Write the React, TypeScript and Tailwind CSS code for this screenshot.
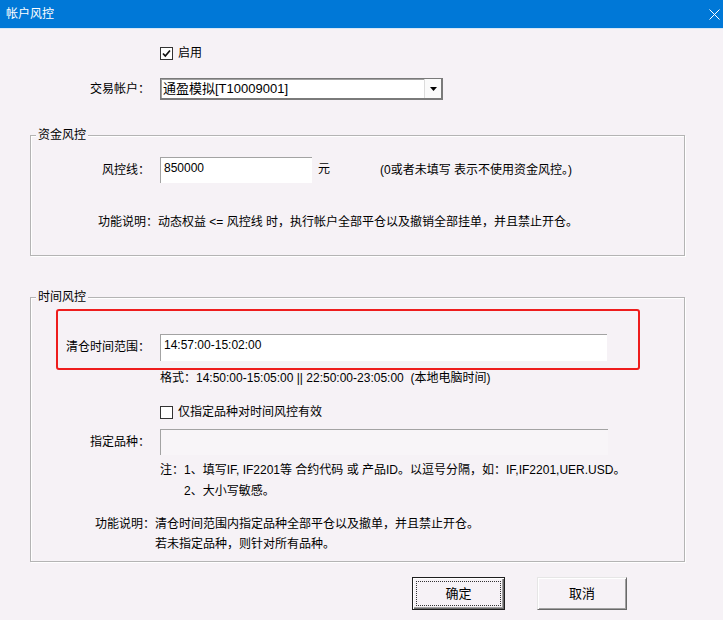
import React from "react";

const face = "bg-[#f6f2f6]";

function Check({checked}: {checked?: boolean}) {
    return (<span className="w-[13px] h-[13px] border border-[#333] bg-white flex items-center justify-center">
        {checked && <svg width="11" height="11" viewBox="0 0 11 11">
            <path d="M2 5.5 L4.3 8 L9 2.5" fill="none" stroke="#111" strokeWidth="1.7"/>
        </svg>}
    </span>);
}

function Group({title, className, children}: {title: string; className: string; children: React.ReactNode}) {
    return (<div
        className={`relative border border-[#b4b4b4] shadow-[inset_1px_1px_0_#fff,1px_1px_0_#fff] ${className}`}>
        <span className={`absolute -top-[9px] left-[5px] px-[2px] leading-[16px] ${face}`}>{title}</span>
        {children}
    </div>);
}

function Edit({className, children}: {className: string; children?: React.ReactNode}) {
    return (<div
        className={`border-t border-l border-[#a3a3a3] px-[3px] pt-[2px] leading-[16px] ${className}`}>{children}</div>);
}

export default function App() {
    return (<div
        className={`w-[723px] h-[620px] overflow-hidden text-[12px] text-black ${face} font-['Liberation_Sans','Noto_Sans_CJK_SC',sans-serif]`}>
        <div className="h-[28px] bg-[#0078d7] flex items-center justify-between pl-[6px] pr-[3px] text-white">
            <span>帐户风控</span>
            <svg width="11" height="11" viewBox="0 0 11 11">
                <path d="M0.5 0.5 L10.5 10.5 M10.5 0.5 L0.5 10.5" stroke="#fff" strokeWidth="1"/>
            </svg>
        </div>
        <div className="h-[1px] bg-[#d5e6f6]"/>

        <div className="mt-[16px] h-[16px] ml-[160px] flex items-center gap-[5px]">
            <Check checked/>
            <span>启用</span>
        </div>

        <div className="mt-[17px] h-[22px] flex items-center">
            <span className="w-[150px] text-right">交易帐户：</span>
            <div
                className="ml-[10px] w-[283px] h-[22px] flex border border-[#7a7a7a] border-r-2 border-b-2 bg-white shadow-[inset_1px_1px_0_#a0a0a0]">
                <span className="flex-1 pl-[2px] text-[13px] leading-[19px]">通盈模拟[T10009001]</span>
                <span className="w-[17px] border-l border-[#dcdcdc] flex items-center justify-center bg-[#fafafa]">
                    <svg width="7" height="4" viewBox="0 0 7 4"><path d="M0 0 H7 L3.5 4 Z" fill="#000"/></svg>
                </span>
            </div>
        </div>

        <Group title="资金风控" className="mt-[35px] ml-[30px] w-[655px] h-[121px]">
            <div className="mt-[21px] flex items-start">
                <span className="w-[119px] text-right leading-[26px]">风控线：</span>
                <Edit className="ml-[10px] w-[152px] h-[26px] bg-white">850000</Edit>
                <span className="ml-[6px] leading-[24px]">元</span>
                <span className="ml-[50px] leading-[26px]">(0或者未填写 表示不使用资金风控。)</span>
            </div>
            <div className="mt-[31px] ml-[67px] leading-[16px]">
                功能说明：动态权益 &lt;= 风控线 时，执行帐户全部平仓以及撤销全部挂单，并且禁止开仓。
            </div>
        </Group>

        <Group title="时间风控" className="mt-[41px] ml-[30px] w-[655px] h-[265px]">
            <div className="mt-[11px] ml-[25px] w-[584px] h-[61px] border-2 border-[#ee1d1d] rounded-[3px]">
                <div className="mt-[23px] flex items-start">
                    <span className="w-[92px] text-right leading-[27px]">清仓时间范围：</span>
                    <Edit className="ml-[10px] w-[447px] h-[27px] bg-white">14:57:00-15:02:00</Edit>
                </div>
            </div>
            <div className="ml-[129px] leading-[16px]">格式：14:50:00-15:05:00 || 22:50:00-23:05:00 &nbsp;(本地电脑时间)</div>

            <div className="mt-[18px] ml-[129px] h-[16px] flex items-center gap-[5px]">
                <Check/>
                <span>仅指定品种对时间风控有效</span>
            </div>

            <div className="mt-[9px] flex items-start">
                <span className="w-[119px] text-right leading-[26px]">指定品种：</span>
                <Edit className="ml-[10px] w-[448px] h-[26px] bg-[#f8f5f8]"/>
            </div>

            <div className="mt-[5px] ml-[129px] leading-[21px]">
                <div>注：1、填写IF, IF2201等 合约代码 或 产品ID。以逗号分隔，如：IF,IF2201,UER.USD。</div>
                <div className="pl-[24px]">2、大小写敏感。</div>
            </div>

            <div className="mt-[12px] ml-[64px] flex leading-[20px]">
                <span>功能说明：</span>
                <div>
                    <div>清仓时间范围内指定品种全部平仓以及撤单，并且禁止开仓。</div>
                    <div>若未指定品种，则针对所有品种。</div>
                </div>
            </div>
        </Group>

        <div className="mt-[15px] ml-[412px] flex gap-[32px] text-[13px]">
            <button
                className={`w-[93px] h-[33px] border border-[#1e1e1e] p-[3px] ${face} shadow-[inset_1px_1px_0_#fff,inset_-1px_-1px_0_#696969,inset_-2px_-2px_0_#a0a0a0]`}>
                <div className="w-full h-full border border-dotted border-[#333] flex items-center justify-center">确定</div>
            </button>
            <button
                className={`w-[90px] h-[33px] border-t border-l border-[#e6e6e6] border-r border-b border-r-[#696969] border-b-[#696969] ${face} shadow-[inset_1px_1px_0_#fff,inset_-1px_-1px_0_#a0a0a0] flex items-center justify-center`}>
                取消
            </button>
        </div>
    </div>);
}
